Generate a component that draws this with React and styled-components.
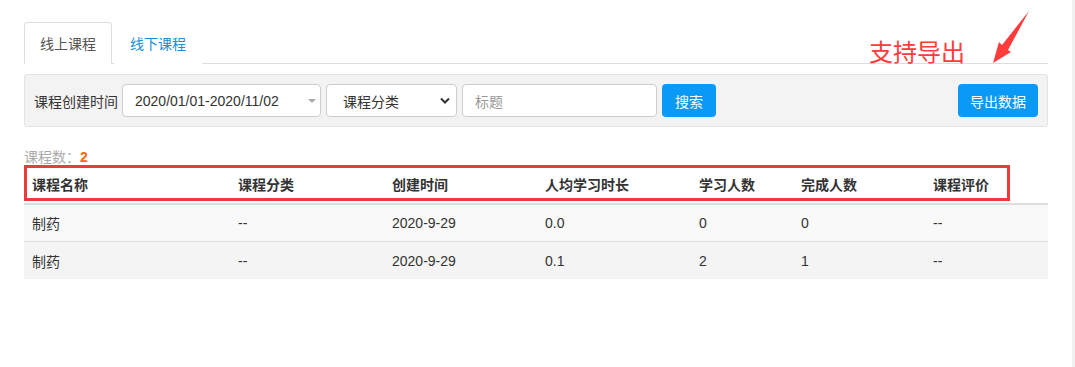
import React from 'react';
import styled, { createGlobalStyle } from 'styled-components';

const GlobalStyle = createGlobalStyle`
  html, body {
    margin: 0;
    padding: 0;
    background: #fff;
  }
  body {
    font-family: "Liberation Sans", "Noto Sans CJK SC", sans-serif;
    font-size: 14px;
    color: #333;
  }
  #root {
    min-height: 100vh;
    box-sizing: border-box;
    border-right: 3px solid #f1f1f1;
  }
  * { box-sizing: border-box; }
`;

const Page = styled.div`
  position: relative;
  width: 1072px;
  padding: 22px 24px 0 24px;
`;

const Content = styled.div`
  width: 1024px;
`;

// tabs
const TabBar = styled.div`
  display: flex;
  border-bottom: 1px solid #ddd;
  height: 42px;
`;

const Tab = styled.div`
  height: 42px;
  padding: 0 15px;
  margin-right: 2px;
  display: flex;
  align-items: center;
  font-size: 14px;
  border: 1px solid ${p => (p.$active ? '#ddd' : 'transparent')};
  border-bottom-color: ${p => (p.$active ? '#fff' : 'transparent')};
  border-radius: 4px 4px 0 0;
  background: #fff;
  color: ${p => (p.$active ? '#555' : '#1a8fd6')};
`;

// filter toolbar
const Toolbar = styled.div`
  margin-top: 10px;
  height: 53px;
  background: #f3f3f3;
  border: 1px solid #e3e3e3;
  border-radius: 3px;
  padding: 0 9px;
  display: flex;
  align-items: center;
`;

const Label = styled.span`
  font-size: 14px;
  color: #333;
  margin-right: 4px;
`;

const Field = styled.div`
  position: relative;
  width: ${p => p.$w}px;
  height: 33px;
  margin-right: 5px;
  background: #fff;
  border: 1px solid #ccc;
  border-radius: 4px;
  display: flex;
  align-items: center;
  padding-left: ${p => p.$pad || 12}px;
  font-size: 14px;
  color: ${p => (p.$placeholder ? '#999' : '#333')};
`;

const Caret = styled.span`
  position: absolute;
  right: 4px;
  top: 14px;
  width: 0;
  height: 0;
  border-left: 4px solid transparent;
  border-right: 4px solid transparent;
  border-top: 4px solid #aaa;
`;

const Chevron = styled.svg`
  position: absolute;
  right: 6px;
  top: 12px;
`;

const Button = styled.button`
  height: 33px;
  padding: 0 ${p => p.$px || 13}px;
  border: none;
  border-radius: 4px;
  background: #0b99f6;
  color: #fff;
  font-family: inherit;
  font-size: 14px;
  margin-left: ${p => (p.$push ? 'auto' : '0')};
`;

// summary + table
const Count = styled.div`
  margin-top: 23px;
  font-size: 14px;
  line-height: 15px;
  color: #aaa;
`;

const CountNum = styled.b`
  color: #f60;
`;

const Table = styled.div`
  width: 1024px;
`;

const Row = styled.div`
  display: grid;
  grid-template-columns: 206px 154px 153px 154px 102px 132px 1fr;
  align-items: center;
  height: ${p => (p.$head ? 40 : 37)}px;
  background: ${p => p.$bg || '#fff'};
  border-bottom: ${p => (p.$head ? '2px solid #ddd' : p.$line ? '1px solid #ddd' : 'none')};
`;

const Cell = styled.div`
  padding: 0 8px;
  font-size: 14px;
  font-weight: ${p => (p.$head ? 700 : 400)};
  color: #333;
  white-space: nowrap;
`;

// annotation overlays
const Note = styled.div`
  position: absolute;
  left: 869px;
  top: 38px;
  font-size: 24px;
  line-height: 26px;
  color: #ff3b3b;
  font-family: "Noto Sans CJK SC", sans-serif;
`;

const Arrow = styled.svg`
  position: absolute;
  left: 985px;
  top: 5px;
`;

const Highlight = styled.div`
  position: absolute;
  left: 24px;
  top: 165px;
  width: 986px;
  height: 36px;
  border: 3px solid #f03a3a;
`;

const headers = ['课程名称', '课程分类', '创建时间', '人均学习时长', '学习人数', '完成人数', '课程评价'];
const rows = [
  ['制药', '--', '2020-9-29', '0.0', '0', '0', '--'],
  ['制药', '--', '2020-9-29', '0.1', '2', '1', '--'],
];

export default function App() {
  return (
    <>
      <GlobalStyle />
      <Page>
        <Content>
          <TabBar>
            <Tab $active>线上课程</Tab>
            <Tab>线下课程</Tab>
          </TabBar>

          <Toolbar>
            <Label>课程创建时间</Label>
            <Field $w={199}>
              2020/01/01-2020/11/02
              <Caret />
            </Field>
            <Field $w={131} $pad={16}>
              课程分类
              <Chevron width="10" height="8" viewBox="0 0 10 8">
                <path d="M1 1.5 L5 5.5 L9 1.5" fill="none" stroke="#333" strokeWidth="2" />
              </Chevron>
            </Field>
            <Field $w={195} $placeholder>标题</Field>
            <Button>搜索</Button>
            <Button $push $px={12}>导出数据</Button>
          </Toolbar>

          <Count>
            课程数：<CountNum>2</CountNum>
          </Count>

          <Table>
            <Row $head>
              {headers.map(h => (
                <Cell key={h} $head>{h}</Cell>
              ))}
            </Row>
            {rows.map((r, i) => (
              <Row key={i} $bg={i === 0 ? '#f9f9f9' : '#f4f4f4'} $line={i === 0}>
                {r.map((c, j) => (
                  <Cell key={j}>{c}</Cell>
                ))}
              </Row>
            ))}
          </Table>
        </Content>

        <Note>支持导出</Note>
        <Arrow width="50" height="62" viewBox="985 5 50 62">
          <polygon
            points="1029,11 1008,50 1011,52 993,63 999,42 1002,45 1029,11"
            fill="#ff3b3b"
          />
        </Arrow>
        <Highlight />
      </Page>
    </>
  );
}
